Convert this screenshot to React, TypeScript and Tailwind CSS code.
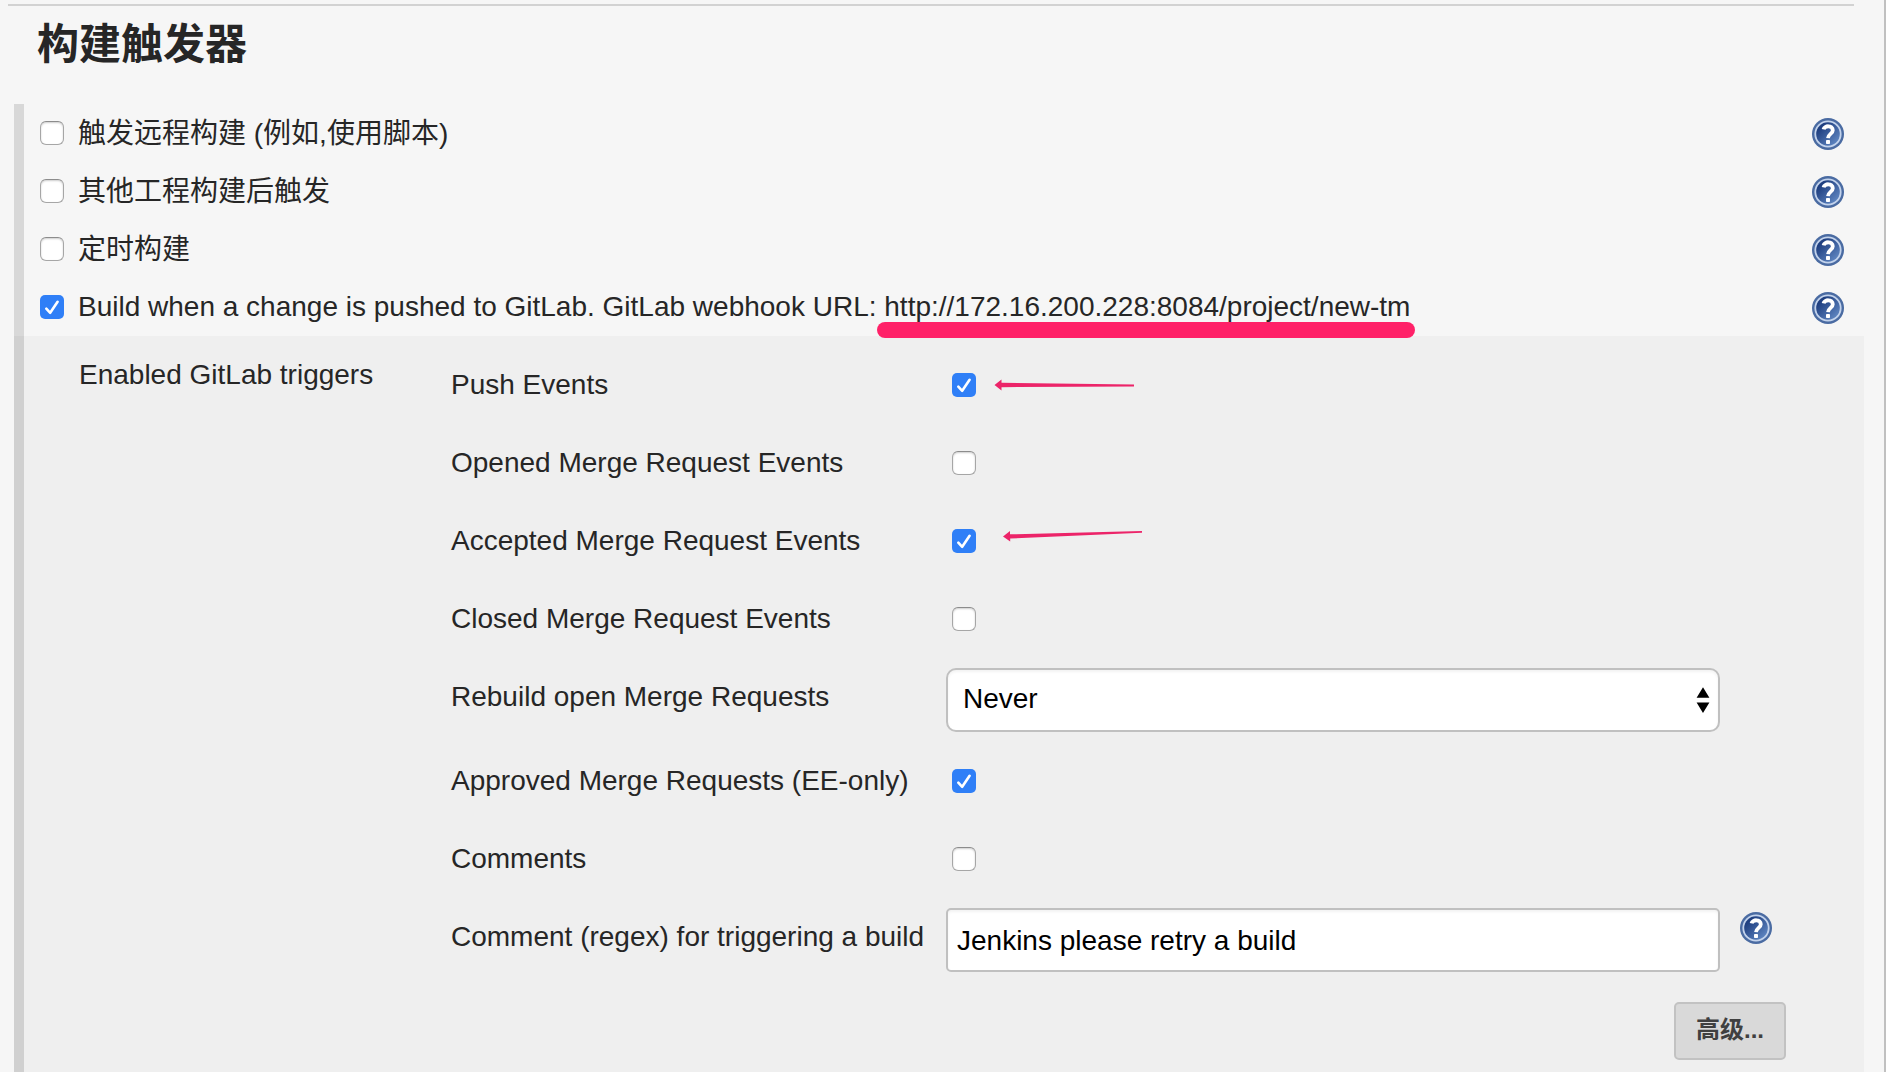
import type { ReactNode } from "react";

function Help() {
  return (
    <svg width="32" height="32" viewBox="0 0 32 32" className="block shrink-0">
      <defs>
        <linearGradient id="disc" x1="0" y1="0" x2="1" y2="1">
          <stop offset="0.2" stopColor="#1f3f80" />
          <stop offset="1" stopColor="#6a92cc" />
        </linearGradient>
      </defs>
      <circle cx="16" cy="16" r="16" fill="#4a6ba2" />
      <circle cx="16" cy="16" r="13.6" fill="#c3d3ec" />
      <circle cx="16" cy="16" r="11.8" fill="url(#disc)" />
      <path
        d="M11.6 11.4C12.2 7.4 20.8 6.8 20.8 12.2C20.8 16 16.2 15.8 16 20.2"
        fill="none"
        stroke="#fff"
        strokeWidth="3.8"
      />
      <rect x="14" y="22" width="4" height="4" rx="0.8" fill="#fff" />
    </svg>
  );
}

function Check({ on = false }: { on?: boolean }) {
  return on ? (
    <span className="block size-6 shrink-0 rounded-[5px] bg-[#2f7ff7]">
      <svg viewBox="0 0 24 24" className="block size-6">
        <path
          d="M6.3 13.6L10.2 17.8L17.6 6.8"
          fill="none"
          stroke="#fff"
          strokeWidth="2.6"
          strokeLinecap="round"
          strokeLinejoin="round"
        />
      </svg>
    </span>
  ) : (
    <span className="block size-6 shrink-0 rounded-[6px] border border-[#a6a6a6] border-t-[#8c8c8c] bg-white shadow-[inset_0_1px_2px_rgba(0,0,0,0.2)]" />
  );
}

const triggers = [
  { label: "触发远程构建 (例如,使用脚本)", on: false, pad: "pt-[14px]" },
  { label: "其他工程构建后触发", on: false, pad: "pt-[14px]" },
  { label: "定时构建", on: false, pad: "pt-[14px]" },
  {
    label:
      "Build when a change is pushed to GitLab. GitLab webhook URL: http://172.16.200.228:8084/project/new-tm",
    on: true,
    pad: "pt-[13px]",
  },
];

function EventRow({
  label,
  on,
  arrow,
}: {
  label: string;
  on?: boolean;
  arrow?: ReactNode;
}) {
  return (
    <div className="relative flex h-[78px] items-start">
      <span className="w-[501px] pt-2">{label}</span>
      <div className="pt-3">
        <Check on={on} />
      </div>
      {arrow}
    </div>
  );
}

export default function App() {
  return (
    <div className="h-[1072px] w-[1886px] overflow-hidden border-r-2 border-[#c0c0c0] bg-[#f6f6f6] font-['Liberation_Sans','Noto_Sans_CJK_SC',sans-serif] text-[28px] leading-8 whitespace-nowrap text-[#262626]">
      <div className="ml-2 h-[6px] w-[1846px] border-b-2 border-[#d2d2d2]" />
      <h1 className="flex h-[98px] items-start pt-2 pl-[37px] text-[42px] leading-[62px] font-bold">
        构建触发器
      </h1>

      <div className="ml-[14px] w-[1850px]">
        <div className="h-[232px] border-l-[10px] border-[#d8d8d8]">
          {triggers.map((t) => (
            <div key={t.label} className="flex h-[58px] items-start pr-5 pl-4">
              <div className="pt-[17px]">
                <Check on={t.on} />
              </div>
              <span className={`ml-[14px] grow ${t.pad}`}>{t.label}</span>
              <div className="pt-[14px]">
                <Help />
              </div>
            </div>
          ))}
        </div>

        <div className="relative flex h-[736px] border-l-[10px] border-[#d0d0d0] bg-[#efefef]">
          <div className="absolute -top-[14px] left-[852.5px] h-4 w-[538px] rounded-full bg-[#ff2168]" />
          <div className="w-[427px] pt-[23px] pl-[55px]">
            Enabled GitLab triggers
          </div>
          <div className="grow pt-[25px]">
            <EventRow
              label="Push Events"
              on
              arrow={
                <svg className="absolute top-4 left-[543px]" width="142" height="16" viewBox="0 0 142 16">
                  <path d="M0.5 8L7.5 2.5V5.8L140 7.6V9.4L7.5 10.2V13.5Z" fill="#ec2469" />
                </svg>
              }
            />
            <EventRow label="Opened Merge Request Events" />
            <EventRow
              label="Accepted Merge Request Events"
              on
              arrow={
                <svg className="absolute top-[9px] left-[551px]" width="142" height="20" viewBox="0 0 142 20">
                  <path d="M1 10.5L8 5V8.3L140 5V6.8L8.2 12.5V15.5Z" fill="#ec2469" />
                </svg>
              }
            />
            <EventRow label="Closed Merge Request Events" />
            <div className="flex h-[84px] items-start">
              <span className="w-[495px] pt-2">Rebuild open Merge Requests</span>
              <div className="-mt-[5px] flex h-16 w-[774px] items-center justify-between rounded-[10px] border-2 border-[#c0c0c0] bg-white pr-2 pl-[15px] text-black shadow-[inset_0_2px_3px_rgba(0,0,0,0.05)]">
                <span className="-mt-0.5">Never</span>
                <svg width="14" height="28" viewBox="0 0 14 28">
                  <path d="M0.6 11.8L7 1.2L13.4 11.8ZM0.6 16.4L7 27L13.4 16.4Z" fill="#000" />
                </svg>
              </div>
            </div>
            <EventRow label="Approved Merge Requests (EE-only)" on />
            <EventRow label="Comments" />
            <div className="flex h-[83px] items-start">
              <span className="w-[495px] pt-2">Comment (regex) for triggering a build</span>
              <div className="-mt-[5px] flex h-16 w-[774px] items-center rounded-[5px] border-2 border-[#c0c0c0] bg-white pt-0.5 pl-[9px] text-black shadow-[inset_0_2px_3px_rgba(0,0,0,0.05)]">
                Jenkins please retry a build
              </div>
              <div className="-mt-px ml-5">
                <Help />
              </div>
            </div>
            <div className="flex justify-end pt-[6px] pr-[78px]">
              <button className="h-[58px] w-[112px] rounded-[5px] border-2 border-[#c2c2c2] bg-[#d9d9d9] pb-0.5 text-[24px] leading-[48px] font-bold text-[#404040]">
                高级...
              </button>
            </div>
          </div>
        </div>
      </div>
    </div>
  );
}
